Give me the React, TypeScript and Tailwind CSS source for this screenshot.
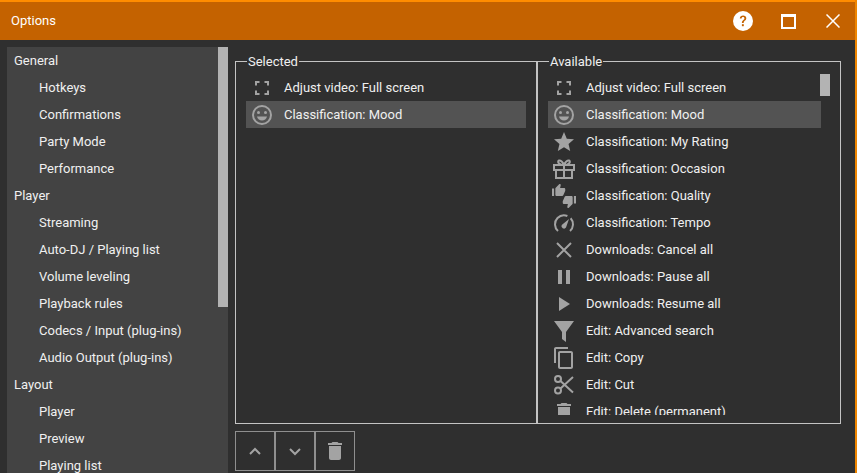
import type { ReactNode } from "react";

type IconName =
  | "fullscreen"
  | "mood"
  | "star"
  | "gift"
  | "quality"
  | "tempo"
  | "cancel"
  | "pause"
  | "play"
  | "filter"
  | "copy"
  | "cut"
  | "trash";

const thumb =
  "M1 21h4V9H1v12zm22-11c0-1.1-.9-2-2-2h-6.31l.95-4.57.03-.32c0-.41-.17-.79-.44-1.06L14.17 1 7.59 7.59C7.22 7.95 7 8.45 7 9v10c0 1.1.9 2 2 2h9c.83 0 1.54-.5 1.84-1.22l3.02-7.05c.09-.23.14-.47.14-.73v-2z";

const icons: Record<IconName, ReactNode> = {
  fullscreen: (
    <path
      d="M6 9.500V6h3.500M14.500 6H18v3.500M6 14.500V18h3.500M14.500 18H18v-3.500"
      fill="none"
      stroke="currentColor"
      strokeWidth="2"
    />
  ),
  mood: (
    <>
      <circle cx="12" cy="12" r="9" fill="none" stroke="currentColor" strokeWidth="2" />
      <circle cx="8.500" cy="9.500" r="1.500" fill="currentColor" />
      <circle cx="15.500" cy="9.500" r="1.500" fill="currentColor" />
      <path d="M7 13.500h10c-.6 2.500-2.600 4-5 4s-4.400-1.500-5-4z" fill="currentColor" />
    </>
  ),
  star: <path fill="currentColor" d="M12 17.270L18.180 21l-1.640-7.030L22 9.240l-7.190-.610L12 2 9.190 8.630 2 9.240l5.460 4.730L5.820 21z" />,
  gift: (
    <g fill="none" stroke="currentColor" strokeWidth="2">
      <path d="M2 8h20v5H2zM4 13v8h16v-8M12 8v13" />
      <path d="M12 8C11 5 8.500 3 7 3.500 5 4.500 6.500 8 12 8zM12 8c1-3 3.500-5 5-4.500 2 1 .5 4.500-5 4.500z" />
    </g>
  ),
  quality: (
    <>
      <path fill="currentColor" transform="translate(-1 -1) scale(0.62)" d={thumb} />
      <path fill="currentColor" transform="translate(25 25) rotate(180) scale(0.62)" d={thumb} />
    </>
  ),
  tempo: (
    <>
      <path
        d="M6 20A9 9 0 1 1 18 20"
        fill="none"
        stroke="currentColor"
        strokeWidth="2"
        strokeDasharray="25 4 20"
      />
      <path fill="currentColor" d="M17 8l-3 8.500a2.500 2.500 0 0 1-4.300-2.500z" />
    </>
  ),
  cancel: <path d="M5 5l14 14M19 5L5 19" fill="none" stroke="currentColor" strokeWidth="2" />,
  pause: <path fill="currentColor" d="M6 5h4v14H6zM14 5h4v14h-4z" />,
  play: <path fill="currentColor" d="M7 5v14l11-7z" />,
  filter: <path fill="currentColor" d="M2 2h20l-8 11v10l-4-3v-7z" />,
  copy: (
    <path
      fill="currentColor"
      d="M16 1H4c-1.100 0-2 .9-2 2v14h2V3h12V1zm3 4H8c-1.100 0-2 .9-2 2v14c0 1.100.9 2 2 2h11c1.100 0 2-.9 2-2V7c0-1.100-.9-2-2-2zm0 16H8V7h11v14z"
    />
  ),
  cut: (
    <g fill="none" stroke="currentColor" strokeWidth="2">
      <circle cx="6" cy="6" r="3" />
      <circle cx="6" cy="17.500" r="3" />
      <path d="M8.500 8L21 19.500M8.500 15.500L21 4" />
    </g>
  ),
  trash: <path fill="currentColor" d="M6 19c0 1.100.9 2 2 2h8c1.100 0 2-.9 2-2V7H6v12zM19 4h-3.500l-1-1h-5l-1 1H5v2h14V4z" />,
};

function Icon({ name }: { name: IconName }) {
  return (
    <svg viewBox="0 0 24 24" className="h-6 w-6 shrink-0 text-[#a3a3a3]">
      {icons[name]}
    </svg>
  );
}

const tree = [
  { label: "General", items: ["Hotkeys", "Confirmations", "Party Mode", "Performance"] },
  {
    label: "Player",
    items: ["Streaming", "Auto-DJ / Playing list", "Volume leveling", "Playback rules", "Codecs / Input (plug-ins)", "Audio Output (plug-ins)"],
  },
  { label: "Layout", items: ["Player", "Preview", "Playing list"] },
];

const available: { icon: IconName; label: string; active?: boolean }[] = [
  { icon: "fullscreen", label: "Adjust video: Full screen" },
  { icon: "mood", label: "Classification: Mood", active: true },
  { icon: "star", label: "Classification: My Rating" },
  { icon: "gift", label: "Classification: Occasion" },
  { icon: "quality", label: "Classification: Quality" },
  { icon: "tempo", label: "Classification: Tempo" },
  { icon: "cancel", label: "Downloads: Cancel all" },
  { icon: "pause", label: "Downloads: Pause all" },
  { icon: "play", label: "Downloads: Resume all" },
  { icon: "filter", label: "Edit: Advanced search" },
  { icon: "copy", label: "Edit: Copy" },
  { icon: "cut", label: "Edit: Cut" },
  { icon: "trash", label: "Edit: Delete (permanent)" },
];

function Row({ icon, label, active }: { icon: IconName; label: string; active?: boolean }) {
  return (
    <div className={`flex h-[27px] shrink-0 items-center pl-1 ${active ? "bg-[#535353]" : ""}`}>
      <Icon name={icon} />
      <span className="ml-2.5 whitespace-nowrap">{label}</span>
    </div>
  );
}

function Box({ title, className, children }: { title: string; className: string; children: ReactNode }) {
  return (
    <fieldset className={`h-[370px] min-w-0 border border-[#c4c4c4] pt-[5px] pl-[10px] ${className}`}>
      <legend className="ml-[1px] px-[1px] text-[13px] leading-[15px]">{title}</legend>
      {children}
    </fieldset>
  );
}

function ToolButton({ children }: { children: ReactNode }) {
  return (
    <button className="flex h-10 w-10 items-center justify-center border border-[#8f8f8f] text-[#a3a3a3]">
      {children}
    </button>
  );
}

export default function App() {
  return (
    <div className="flex h-[473px] w-[857px] flex-col overflow-hidden border-r-2 border-r-[#ee8500] bg-[#2f2f2f] font-['Roboto',sans-serif] text-[13px] text-[#f0f0f0]">
      <header className="flex h-10 shrink-0 items-center border-t-2 border-t-[#ff8c00] bg-[#c46200] pl-[11px] text-white">
        <span className="flex-1">Options</span>
        <svg viewBox="0 0 20 20" className="h-5 w-5">
          <circle cx="10" cy="10" r="10" fill="#fff" />
          <path d="M6.800 7.600c0-2 1.500-3.100 3.300-3.100s3.200 1 3.200 2.800c0 2.400-2.600 2.300-2.600 4.600H8.900c0-3 2.500-3 2.500-4.500 0-.8-.6-1.300-1.400-1.300-.9 0-1.400.6-1.400 1.500z" fill="#c46200" />
          <rect x="8.900" y="13.200" width="1.900" height="2" fill="#c46200" />
        </svg>
        <div className="ml-[28px] h-[15px] w-[15px] border-2 border-t-[3px] border-white" />
        <svg viewBox="0 0 14 14" className="mr-[15px] ml-[30px] h-[14px] w-[14px]">
          <path d="M.5.5l13 13M13.500.5l-13 13" stroke="#fff" strokeWidth="1.500" fill="none" />
        </svg>
      </header>

      <main className="flex min-h-0 flex-1 pt-[7px] pl-[7px]">
        <nav className="flex w-[221px] shrink-0 overflow-hidden bg-[#434343]">
          <div className="min-w-0 flex-1">
            {tree.map((group) => (
              <div key={group.label}>
                <div className="flex h-[27px] items-center pl-[7px]">{group.label}</div>
                {group.items.map((item) => (
                  <div key={item} className="flex h-[27px] items-center pl-8">
                    {item}
                  </div>
                ))}
              </div>
            ))}
          </div>
          <div className="h-[260px] w-2.5 shrink-0 bg-[#b3b3b3]" />
        </nav>

        <div className="ml-[7px] flex w-[606px] flex-col">
          <div className="flex pt-[7px]">
            <Box title="Selected" className="w-[302px] pr-[10px]">
              <Row icon="fullscreen" label="Adjust video: Full screen" />
              <Row icon="mood" label="Classification: Mood" active />
            </Box>
            <Box title="Available" className="w-[304px]">
              <div className="flex h-[341px] overflow-hidden">
                <div className="w-[273px] shrink-0">
                  {available.map((row) => (
                    <Row key={row.label} {...row} />
                  ))}
                </div>
                <div className="ml-[-1px] h-[22px] w-2.5 shrink-0 bg-[#b3b3b3]" />
              </div>
            </Box>
          </div>
          <div className="mt-[7px] flex">
            <ToolButton>
              <svg viewBox="0 0 24 24" className="h-6 w-6">
                <path d="M7 15l5-5 5 5" fill="none" stroke="currentColor" strokeWidth="2" />
              </svg>
            </ToolButton>
            <ToolButton>
              <svg viewBox="0 0 24 24" className="h-6 w-6">
                <path d="M7 10l5 5 5-5" fill="none" stroke="currentColor" strokeWidth="2" />
              </svg>
            </ToolButton>
            <ToolButton>
              <Icon name="trash" />
            </ToolButton>
          </div>
        </div>
      </main>
    </div>
  );
}
